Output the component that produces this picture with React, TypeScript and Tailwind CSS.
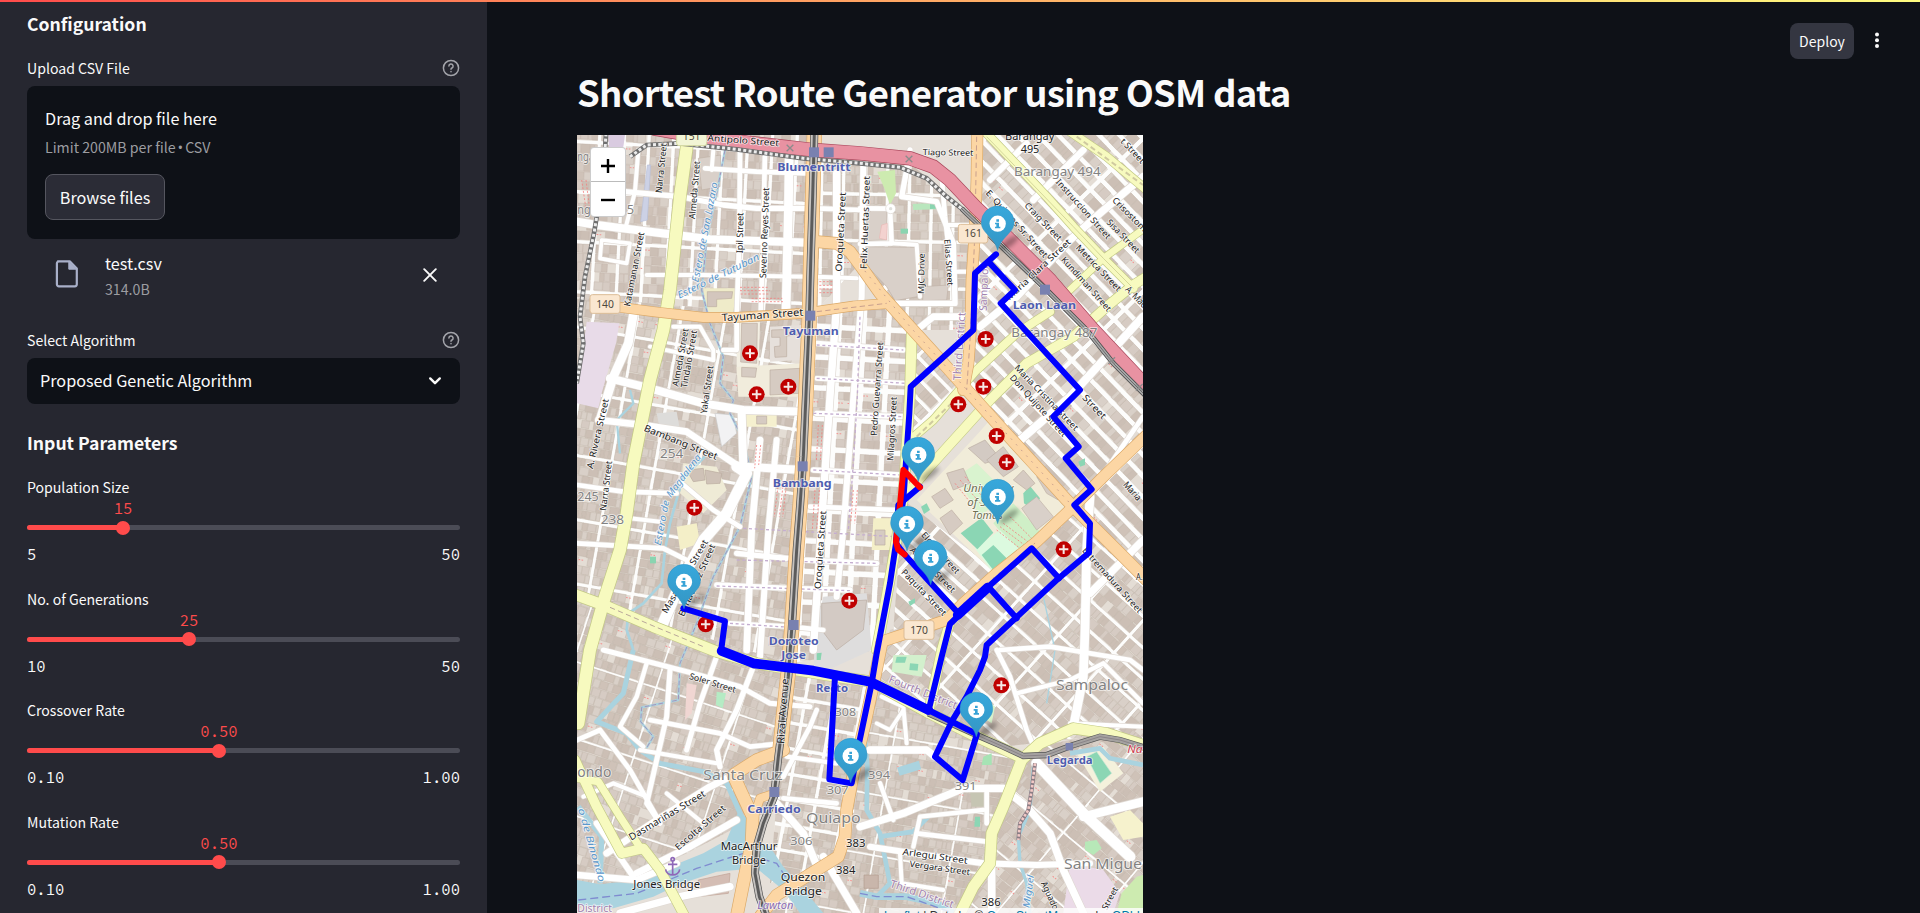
import React from "react";

type Pt = [number, number];

function rng(seed: number) {
  let s = seed;
  return () => {
    s = (s * 1664525 + 1013904223) % 4294967296;
    return s / 4294967296;
  };
}

/* ---------- city blocks ---------- */

interface Region {
  id: string;
  clip: string;
  angle: number;
  w: number;
  h: number;
  street: number;
  cx: number;
  cy: number;
  r: number;
}

const REGIONS: Region[] = [
  { id: "nw", clip: "0,0 740,0 722,560 0,500", angle: 3, w: 74, h: 150, street: 11, cx: 380, cy: 280, r: 520 },
  { id: "n", clip: "735,80 1010,90 1225,280 1210,600 1020,600 870,400 722,560", angle: 1, w: 66, h: 140, street: 11, cx: 960, cy: 320, r: 400 },
  { id: "ne", clip: "1210,0 1730,0 1730,1340 1200,790", angle: 46, w: 330, h: 44, street: 14, cx: 1460, cy: 620, r: 900 },
  { id: "mid", clip: "722,540 950,520 1025,620 1000,1100 920,1560 660,1600 700,1000", angle: 3, w: 74, h: 92, street: 17, cx: 840, cy: 1060, r: 640 },
  { id: "w", clip: "0,500 722,560 700,1000 660,1600 0,1400", angle: 10, w: 130, h: 190, street: 10, cx: 350, cy: 1020, r: 740 },
  { id: "tri", clip: "1025,600 1190,780 1010,960", angle: 46, w: 150, h: 44, street: 11, cx: 1090, cy: 780, r: 250 },
  { id: "se", clip: "1180,1420 1510,1130 1730,1350 1730,1800 1300,1850 920,1640 960,1500", angle: 42, w: 160, h: 70, street: 10, cx: 1360, cy: 1520, r: 560 },
  { id: "paq", clip: "1000,1110 1290,1330 1160,1470 970,1500", angle: 42, w: 210, h: 46, street: 13, cx: 1130, cy: 1310, r: 300 },
  { id: "sw", clip: "0,1400 660,1600 620,2030 0,2349", angle: 18, w: 260, h: 220, street: 6, cx: 300, cy: 1880, r: 620 },
  { id: "s", clip: "650,1620 920,1640 830,2180 600,2260", angle: 10, w: 84, h: 76, street: 11, cx: 760, cy: 1920, r: 420 },
  { id: "sse", clip: "900,1650 1370,1880 1250,2349 600,2349 840,2150", angle: 10, w: 230, h: 180, street: 6, cx: 1040, cy: 2040, r: 560 },
  { id: "sne", clip: "1360,1860 1730,1780 1730,2349 1170,2349 1270,2100", angle: 40, w: 240, h: 170, street: 6, cx: 1500, cy: 2090, r: 480 },
];

const TINTS = ["#d6cbc3", "#cfc2b8", "#d9d0c8", "#ccbfb5"];

function buildRegion(r: Region, seed: number) {
  const rand = rng(seed);
  const houses = ["", "", "", ""];
  let patches = "";
  let pink = "";
  for (let y = -r.r; y < r.r; y += r.h) {
    for (let x = -r.r; x < r.r; x += r.w) {
      const bw = r.w - r.street;
      const bh = r.h - r.street;
      patches += `M${x} ${y}h${bw}v${bh}h${-bw}z`;
      const rows = Math.max(1, Math.round(bh / 26));
      const rh = bh / rows;
      for (let j = 0; j < rows; j++) {
        let px = 0;
        while (px < bw - 6) {
          const ww = Math.min(bw - px, 10 + rand() * 20);
          const k = Math.floor(rand() * 4);
          if (rand() > 0.07) {
            houses[k] += `M${(x + px).toFixed(1)} ${(y + j * rh).toFixed(1)}h${(ww - 1).toFixed(1)}v${(rh - 1 - rand() * 3).toFixed(1)}h${(1 - ww).toFixed(1)}z`;
          } else if (rand() > 0.6) {
            pink += `M${(x + px).toFixed(1)} ${(y + j * rh + 8).toFixed(1)}h16`;
          }
          px += ww;
        }
      }
    }
  }
  return { houses, patches, pink };
}

function Blocks() {
  return (
    <g>
      {REGIONS.map((r, i) => {
        const b = buildRegion(r, 77 + i * 991);
        return (
          <g key={r.id} clipPath={`url(#clip-${r.id})`}>
            <clipPath id={`clip-${r.id}`}>
              <polygon points={r.clip} />
            </clipPath>
            <polygon points={r.clip} fill="#fdfdfc" />
            <g transform={`translate(${r.cx} ${r.cy}) rotate(${r.angle})`}>
              <path d={b.patches} fill="#e4ddd5" />
              {b.houses.map((d, k) => (
                <path key={k} d={d} fill={TINTS[k]} stroke="#c0b3a8" strokeWidth="1.2" />
              ))}
              <path d={b.pink} stroke="#f3918f" strokeWidth="3" strokeDasharray="5 4" />
            </g>
          </g>
        );
      })}
    </g>
  );
}

/* ---------- areas ---------- */

const AREAS: { p: string; c: string; s?: string }[] = [
  { p: "50,575 148,580 138,640 95,790 85,835 21,820 21,760 40,650", c: "#e8dbe8" },
  { p: "115,15 165,15 160,50 118,75", c: "#d9cbe0" },
  { p: "232,105 242,105 232,270 212,275", c: "#ccd1e5", s: "#b8bfd8" },
  { p: "385,85 452,75 450,170 395,180", c: "#d9d0c9", s: "#c0b2a6" },
  { p: "500,575 570,575 565,740 500,735", c: "#f3efe3" },
  { p: "515,580 562,580 560,700 512,696", c: "#d6cbc2", s: "#bcaea2" },
  { p: "600,590 695,585 690,690 600,695", c: "#e6e0db" },
  { p: "605,600 685,597 682,615 650,618 650,680 615,682 613,650 630,648 630,622 605,622", c: "#d6cbc2", s: "#bcaea2" },
  { p: "500,710 700,700 695,800 505,800", c: "#f1ecdc" },
  { p: "515,712 560,714 556,742 515,740", c: "#d6cbc2", s: "#bcaea2" },
  { p: "600,720 690,715 688,790 600,795", c: "#d6cbc2", s: "#bcaea2" },
  { p: "400,475 498,475 490,550 410,550", c: "#efebc9" },
  { p: "412,485 488,485 485,505 440,508 440,530 412,530", c: "#d3c6bd", s: "#bcaea2" },
  { p: "922,125 975,120 978,190 960,225 945,180", c: "#cdebb0" },
  { p: "1028,222 1100,218 1098,238 1030,240", c: "#b9e6bd" },
  { p: "1080,222 1100,218 1098,236 1080,237", c: "#8ad4b0" },
  { p: "992,296 1014,296 1014,311 992,311", c: "#8ad4b0" },
  { p: "905,240 950,240 950,330 885,332 888,260", c: "#d9d0c9", s: "#bfb2a7" },
  { p: "935,285 952,280 950,330 928,325", c: "#f3d2cf", s: "#e9b8b5" },
  { p: "886,350 1040,352 1042,500 975,512 950,470 884,400", c: "#d9d0c9", s: "#bfb2a7" },
  { p: "1060,470 1135,465 1130,510 1058,512", c: "#d9d0c9", s: "#bfb2a7" },
  { p: "435,850 490,855 500,910 455,950", c: "#f2f2f3", s: "#c9c9c9" },
  { p: "520,850 620,850 620,890 525,890", c: "#f5f0cf" },
  { p: "560,858 590,858 590,882 560,882", c: "#d6cbc2", s: "#bcaea2" },
  { p: "260,850 320,845 330,900 270,900", c: "#dddcda" },
  { p: "340,1000 440,1010 470,1080 400,1150 330,1090", c: "#efebd6" },
  { p: "350,1020 400,1015 405,1050 370,1055", c: "#cfc2b7", s: "#b9aa9e" },
  { p: "405,1020 455,1030 450,1060 410,1062", c: "#cfc2b7", s: "#b9aa9e" },
  { p: "320,1190 380,1180 390,1240 330,1260", c: "#f4efc8" },
  { p: "240,1280 258,1280 258,1300 240,1300", c: "#8ad4b0" },
  { p: "910,1165 975,1165 970,1260 905,1260", c: "#f4efc8" },
  { p: "915,1200 945,1200 945,1245 915,1245", c: "#d6cbc2", s: "#bcaea2" },
  { p: "760,1400 890,1390 905,1560 730,1640 735,1500", c: "#dedddd" },
  { p: "755,1420 890,1410 880,1500 800,1560 755,1500", c: "#d3cac4", s: "#b9aca2" },
  { p: "740,1570 755,1568 752,1590 740,1590", c: "#8ad4b0" },
  { p: "1225,910 1260,870 1500,1120 1275,1330 1040,1110", c: "#f1ecd9" },
  { p: "1160,1040 1220,1000 1310,1090 1230,1160", c: "#d9f3cf" },
  { p: "1270,1180 1330,1120 1415,1210 1345,1270", c: "#cfefc7" },
  { p: "1215,1255 1290,1200 1365,1275 1270,1330", c: "#dcfadf" },
  { p: "1172,1210 1235,1163 1270,1208 1222,1258", c: "#8bd6b4" },
  { p: "1235,1275 1270,1245 1310,1285 1268,1318", c: "#8bd6b4" },
  { p: "1360,1090 1380,1068 1410,1105 1388,1140 1362,1120", c: "#8bd6b4" },
  { p: "1355,1135 1400,1100 1450,1160 1400,1200", c: "#d9d0c9", s: "#bfb2a7" },
  { p: "1195,955 1245,930 1290,985 1245,1000", c: "#d3cac3", s: "#b9aca2" },
  { p: "1250,990 1300,950 1345,1010 1300,1040", c: "#d3cac3", s: "#b9aca2" },
  { p: "1400,1040 1440,1075 1465,1110 1430,1090", c: "#d6cbc2", s: "#bcaea2" },
  { p: "1130,1030 1180,1015 1200,1060 1150,1080", c: "#d6cbc2", s: "#bcaea2" },
  { p: "1085,1100 1125,1075 1150,1110 1110,1135", c: "#d6cbc2", s: "#bcaea2" },
  { p: "1110,1165 1145,1140 1178,1180 1140,1215", c: "#d6cbc2", s: "#bcaea2" },
  { p: "1053,1130 1070,1120 1080,1140 1062,1152", c: "#8bd6b4" },
  { p: "1330,1050 1360,1020 1395,1060 1370,1080", c: "#d6cbc2", s: "#bcaea2" },
  { p: "1525,995 1545,985 1545,1005 1530,1010", c: "#8bd6b4" },
  { p: "1015,1415 1035,1405 1035,1418 1020,1428", c: "#8bd6b4" },
  { p: "970,1575 1070,1575 1055,1640 965,1625", c: "#d3f0cd" },
  { p: "980,1580 1010,1580 1005,1598 976,1598", c: "#8bd6b4" },
  { p: "1020,1600 1045,1602 1043,1622 1018,1620", c: "#8bd6b4" },
  { p: "440,1685 468,1690 458,1735 438,1725", c: "#b5ebc4" },
  { p: "1240,1880 1265,1870 1265,1905 1235,1905", c: "#a6e3b4" },
  { p: "1240,1700 1275,1730 1265,1780 1235,1760", c: "#d7f2cb" },
  { p: "1520,1870 1600,1850 1660,1930 1590,1985", c: "#f4f1dc" },
  { p: "1550,1880 1580,1865 1625,1930 1590,1960", c: "#8bd6b4", s: "#cfe8d8" },
  { p: "1545,2135 1580,2130 1595,2155 1570,2175 1545,2160", c: "#b7e8b8" },
  { p: "1640,2349 1655,2290 1700,2240 1719,2235 1719,2349", c: "#cdebb0" },
  { p: "1500,2200 1600,2220 1650,2290 1630,2349 1480,2349", c: "#ebdbe8" },
  { p: "1215,2060 1230,2060 1230,2090 1213,2090", c: "#8bd6b4" },
  { p: "1200,1980 1240,1970 1245,2030 1205,2030", c: "#c6c5b3" },
  { p: "1620,2060 1680,2040 1719,2080 1719,2120 1660,2130", c: "#f6f2cd" },
  { p: "385,2250 480,2230 475,2290 385,2300", c: "#d4bdb4", s: "#c0a296" },
  { p: "882,2235 925,2235 925,2275 882,2275", c: "#c9b6ab", s: "#b39d90" },
  { p: "350,1660 380,1665 365,1750 345,1770", c: "#f0d6d2" },
];

const RIVER =
  "21,2250 90,2263 200,2250 300,2210 400,2170 470,2130 505,2045 528,2060 530,2120 600,2150 640,2210 690,2265 760,2349 690,2349 640,2280 560,2215 440,2225 330,2262 250,2300 130,2335 21,2325";

const CANALS: { d: string; w: number }[] = [
  { d: "M465 60 440 190 410 330 395 480 420 580 460 680 450 760 490 810 480 850 520 930 545 1040 510 1190 430 1340 380 1480 330 1600 325 1710 215 1732 212 1775 250 1820 220 1870", w: 7 },
  { d: "M190 1560 160 1690 80 1775 170 1810 210 1860 270 1900 400 1925 470 1960 515 2060", w: 15 },
  { d: "M25 2030 95 2120 90 2260", w: 16 },
  { d: "M405 980 340 1040 325 1090 300 1180 285 1260 275 1360 220 1420 175 1450 170 1500 190 1560", w: 8 },
  { d: "M885 1830 892 1910 890 2040 930 2110 960 2260 920 2300", w: 14 },
  { d: "M930 2120 1030 2105 1075 2060", w: 14 },
  { d: "M985 1925 1050 1905", w: 26 },
  { d: "M870 2290 920 2300 1010 2300 1100 2320 1150 2349", w: 20 },
  { d: "M1500 1870 1590 1855 1620 1885 1719 1905", w: 14 },
  { d: "M1390 1910 1380 2040 1345 2120 1350 2200 1370 2260 1380 2349", w: 10 },
  { d: "M1420 1400 1455 1560 1430 1720", w: 4 },
  { d: "M180 780 190 820 140 870 150 970", w: 7 },
];

/* ---------- roads ---------- */

const WHITE: { d: string; w: number }[] = [
  { d: "M165 185 330 200 460 225 560 235 718 235", w: 16 },
  { d: "M21 275 80 285 240 305 420 328 718 338", w: 24 },
  { d: "M405 115 560 125 718 130", w: 14 },
  { d: "M230 435 400 435 718 440", w: 12 },
  { d: "M95 330 90 385 170 400 180 340 95 330", w: 11 },
  { d: "M205 60 195 185 165 300", w: 12 },
  { d: "M510 60 508 320 500 560 500 660 460 660", w: 14 },
  { d: "M658 50 655 250 648 545", w: 26 },
  { d: "M585 60 580 300 572 550", w: 14 },
  { d: "M430 60 425 120", w: 12 },
  { d: "M190 555 175 640 130 740 90 870", w: 26 },
  { d: "M120 745 240 775 400 820 520 840 708 845", w: 24 },
  { d: "M85 870 220 885 350 905 500 1005", w: 20 },
  { d: "M500 1010 530 1030 470 1150 400 1230 340 1340 270 1500", w: 32 },
  { d: "M515 845 520 1010 700 1020", w: 24 },
  { d: "M335 1060 430 1140 510 1190", w: 14 },
  { d: "M240 650 430 690", w: 12 },
  { d: "M310 590 390 590 430 660 430 690", w: 12 },
  { d: "M21 1240 280 1255 370 1300", w: 14 },
  { d: "M180 1165 270 1175", w: 12 },
  { d: "M21 1065 160 1085 320 1090", w: 14 },
  { d: "M570 930 545 1200 530 1560", w: 20 },
  { d: "M620 930 595 1200 570 1580", w: 18 },
  { d: "M800 130 800 520 780 800 760 1100 730 1560", w: 22 },
  { d: "M880 100 875 500 850 800 820 1200 800 1400", w: 18 },
  { d: "M500 1270 700 1290 920 1300", w: 16 },
  { d: "M440 1365 660 1375 840 1380", w: 16 },
  { d: "M480 1480 660 1490 760 1500", w: 14 },
  { d: "M740 235 870 240", w: 14 },
  { d: "M740 440 860 445", w: 12 },
  { d: "M740 640 1000 660", w: 16 },
  { d: "M740 745 1010 760", w: 14 },
  { d: "M740 850 1000 860", w: 16 },
  { d: "M730 1020 990 1035", w: 16 },
  { d: "M720 1130 980 1140", w: 14 },
  { d: "M870 235 960 236 965 340 870 342", w: 14 },
  { d: "M965 340 1040 344 1050 500", w: 12 },
  { d: "M1020 60 1010 120 995 200 1100 215 1150 340 1155 520 960 520", w: 16 },
  { d: "M1115 140 1125 260 1145 430", w: 14 },
  { d: "M1200 560 1090 560 1040 600", w: 20 },
  { d: "M1140 425 1200 425", w: 12 },
  { d: "M1130 285 1200 285", w: 12 },
  { d: "M1390 210 1490 110 1540 60", w: 20 },
  { d: "M1230 590 1340 500 1500 330 1590 250 1719 140", w: 22 },
  { d: "M1340 940 1500 800 1719 560", w: 24 },
  { d: "M1560 1090 1719 860", w: 14 },
  { d: "M1370 40 1260 150", w: 18 },
  { d: "M1510 1110 1719 1330", w: 10 },
  { d: "M1560 1100 1550 1260 1545 1500 1540 1640 1510 1790", w: 26 },
  { d: "M1560 1390 1719 1230", w: 22 },
  { d: "M1290 1560 1440 1550 1680 1590 1719 1620", w: 14 },
  { d: "M1280 1560 1320 1640 1370 1800 1400 1870", w: 14 },
  { d: "M1340 1690 1500 1650 1600 1600 1719 1720", w: 13 },
  { d: "M1500 1780 1719 1790", w: 12 },
  { d: "M1400 1900 1540 2050 1680 2180", w: 32 },
  { d: "M1540 2060 1719 2015", w: 26 },
  { d: "M870 2090 1000 2050 1180 1975 1300 1975 1370 2030 1440 2110 1480 2220 1540 2349", w: 22 },
  { d: "M900 1860 1070 1860 1095 1880", w: 22 },
  { d: "M935 1700 1000 1730 1010 1840", w: 12 },
  { d: "M920 1780 960 1800 1000 1740", w: 11 },
  { d: "M930 1960 970 2070M1030 2150 1050 2060 1240 2040", w: 13 },
  { d: "M900 2150 1100 2180 1240 2200 1400 2205 1560 2200", w: 18 },
  { d: "M1040 2110 1250 2135", w: 14 },
  { d: "M990 2170 995 2260 1120 2280", w: 12 },
  { d: "M1265 2210 1265 2349", w: 22 },
  { d: "M1250 1980 1250 2080", w: 14 },
  { d: "M100 1560 370 1630 510 1670 600 1720 720 1730", w: 15 },
  { d: "M440 1580 390 1720 350 1860", w: 15 },
  { d: "M300 1620 290 1760 230 2020 270 2080", w: 15 },
  { d: "M550 1610 500 1740 440 1860 450 1910", w: 16 },
  { d: "M240 1770 450 1810 540 1850 640 1840", w: 14 },
  { d: "M230 1600 200 1700 150 1790 220 1850", w: 13 },
  { d: "M21 1830 90 1800 180 1920 260 2060", w: 14 },
  { d: "M210 1860 440 1900", w: 12 },
  { d: "M40 2000 130 1960 230 2000", w: 12 },
  { d: "M110 2170 260 2070 420 1970 520 1920", w: 20 },
  { d: "M200 2230 360 2150 500 2070", w: 20 },
  { d: "M290 1990 400 2080", w: 12 },
  { d: "M21 2235 200 2250 320 2200", w: 20 },
  { d: "M150 2349 330 2300 480 2270", w: 22 },
  { d: "M80 2080 190 2240", w: 18 },
  { d: "M640 1940 720 1790 740 1740", w: 14 },
  { d: "M650 1880 800 1900", w: 13 },
  { d: "M640 2005 800 2020", w: 14 },
  { d: "M620 2020 700 2110 750 2230", w: 22 },
  { d: "M760 2180 860 2349", w: 22 },
];

const YELLOW: { d: string; w: number }[] = [
  { d: "M355 15 330 200 300 480 280 600 240 750 230 800 190 1000 170 1150 150 1260 105 1400 60 1560 25 1780", w: 36 },
  { d: "M10 1392 100 1425 250 1490 440 1565 560 1600 800 1640 905 1655 1070 1745 1220 1820 1360 1885 1410 1840 1510 1795 1610 1810 1719 1845", w: 32 },
  { d: "M15 1890 80 2030 155 2170 220 2155 270 2220 345 2360", w: 28 },
  { d: "M25 1945 85 1955 150 2060 215 2160", w: 22 },
  { d: "M1245 5 1350 115 1430 200 1510 290 1600 385 1690 475", w: 24 },
  { d: "M1500 5 1610 80 1730 180", w: 24 },
  { d: "M1730 290 1600 385 1500 480", w: 20 },
  { d: "M1730 440 1690 465 1610 530 1510 620 1370 700 1260 810 1070 1020 1000 1105", w: 28 },
  { d: "M1440 545 1340 610 1220 720 1090 870 1020 930", w: 24 },
  { d: "M1025 610 1020 790 1000 1100 975 1260 950 1400 920 1560", w: 30 },
  { d: "M1140 1475 1115 1560 1075 1750", w: 28 },
  { d: "M1355 1890 1300 2030 1265 2110 1260 2200 1210 2270 1165 2360", w: 32 },
];

const ORANGE: { d: string; w: number }[] = [
  { d: "M150 532 250 545 400 562 500 562 700 550 850 528 960 520", w: 28 },
  { d: "M733 10 728 200 722 400 718 560 712 700 700 980 690 1130 680 1260 665 1500 655 1625 640 1760 630 1860", w: 42 },
  { d: "M740 335 800 340 840 365 870 405 930 490 1020 590 1120 700 1200 790 1290 890 1390 1000 1490 1110 1570 1190 1650 1270 1730 1350", w: 34 },
  { d: "M1222 10 1220 150 1215 300 1205 450 1202 600 1195 700 1180 780", w: 32 },
  { d: "M935 1535 1040 1500 1130 1470 1180 1420 1280 1330 1400 1235 1510 1130 1600 1040 1730 915", w: 32 },
  { d: "M935 1540 915 1640 885 1780 850 1930 830 2040 825 2120 805 2180 700 2245 620 2295 570 2360", w: 34 },
  { d: "M640 1860 560 1890 490 1935 515 1990 548 2060 545 2140 520 2260 500 2360", w: 36 },
  { d: "M615 1990 570 2005 552 2060", w: 24 },
];

const PINK = "M250 -5 420 25 640 50 730 60 870 70 1020 85 1090 110 1140 150 1220 235 1300 310 1350 360 1440 450 1570 600 1730 770";
const RAIL_A = "M180 80 230 45 330 40 500 58 700 85 870 100 990 112 1070 145 1130 200 1180 240";
const RAIL_B = "M1175 236 1300 355 1430 480 1550 600 1630 700 1730 800";
const WRAIL = "M108 10 105 60 90 200 72 310 45 440 30 560 40 640 20 760";
const LRT = "M733 10 728 200 722 400 718 560 712 700 700 980 690 1130 680 1260 665 1500 655 1640 640 1760 625 1880 612 2000 580 2080 560 2150 555 2230 568 2300 590 2360";
const LRT2 = "M1075 1750 1220 1815 1300 1850 1360 1878 1430 1875 1510 1845 1590 1820 1650 1830 1730 1855";

const ROUTE_THIN = [
  "M1278 373 1215 430 1210 600 1022 770 1018 850 1000 1110 978 1240 960 1360 920 1570 905 1660 865 1850 845 1960 778 1948 795 1640",
  "M1258 398 1335 480 1292 520 1530 780 1450 860 1526 950 1487 985 1565 1078 1513 1125 1560 1180 1557 1268 1460 1350 1250 1545 1245 1580 1230 1620 1190 1700 1145 1775 1095 1880 1178 1950 1220 1815",
  "M1050 1070 985 1125 978 1240 1005 1275 1165 1450",
  "M1165 1450 1255 1370 1385 1255 1467 1345",
  "M1255 1370 1340 1465",
  "M1255 1370 1140 1482 1115 1580 1075 1745",
  "M340 1435 465 1473 453 1565",
  "M1075 1740 1220 1812",
];
const ROUTE_THICK = ["M455 1563 550 1600 730 1622 900 1655 1075 1740", "M1163 1455 1253 1373"];

/* ---------- labels ---------- */

interface Label {
  t: string;
  x: number;
  y: number;
  a?: number;
  l: number;
  s?: number;
  c?: string;
  b?: boolean;
  i?: boolean;
}

const PLACE = "#828282";
const STATION = "#4f5db0";
const WATER = "#5b98cc";
const DIST = "#a283b0";

const LABELS: Label[] = [
  { t: "Antipolo Street", x: 412, y: 32, a: 4.5, l: 215 },
  { t: "Narra Street", x: 275, y: 190, a: -84, l: 150 },
  { t: "Almeda Street", x: 375, y: 268, a: -85, l: 175 },
  { t: "Ipil Street", x: 518, y: 370, a: -89, l: 122 },
  { t: "Severino Reyes Street", x: 588, y: 445, a: -88, l: 272 },
  { t: "Oroquieta Street", x: 815, y: 425, a: -87, l: 238 },
  { t: "Felix Huertas Street", x: 890, y: 418, a: -88, l: 280 },
  { t: "Katamanan Street", x: 180, y: 530, a: -79, l: 226 },
  { t: "Tayuman Street", x: 456, y: 574, a: -4, l: 245, s: 31 },
  { t: "Almeda Street", x: 325, y: 770, a: -80, l: 175 },
  { t: "Tindalo Street", x: 351, y: 775, a: -80, l: 175 },
  { t: "Yakal Street", x: 410, y: 852, a: -82, l: 145 },
  { t: "Estero de San Lazaro", x: 385, y: 458, a: -79, l: 305, c: WATER, i: true, s: 29 },
  { t: "Estero de Tutuban", x: 328, y: 506, a: -26, l: 270, c: WATER, i: true, s: 29 },
  { t: "Blumentritt", x: 622, y: 124, l: 220, c: STATION, b: true, s: 33 },
  { t: "Tayuman", x: 638, y: 616, l: 168, c: STATION, b: true, s: 33 },
  { t: "Tiago Street", x: 1058, y: 75, a: 1, l: 152, s: 25 },
  { t: "Barangay", x: 1305, y: 30, l: 148, s: 32 },
  { t: "495", x: 1352, y: 70, l: 56, s: 31 },
  { t: "Barangay 494", x: 1332, y: 138, l: 260, c: PLACE, s: 37 },
  { t: "Barangay 487", x: 1324, y: 621, l: 258, c: PLACE, s: 37 },
  { t: "Instruccion Street", x: 1456, y: 157, a: 48, l: 232, s: 26 },
  { t: "Crisostomo", x: 1625, y: 212, a: 45, l: 150, s: 26 },
  { t: "Craig Street", x: 1362, y: 228, a: 46, l: 148, s: 26 },
  { t: "Sisa Street", x: 1608, y: 278, a: 46, l: 130, s: 26 },
  { t: "E. Quintos Sr. Street", x: 1246, y: 190, a: 48, l: 262, s: 26 },
  { t: "Metrica Street", x: 1516, y: 355, a: 46, l: 182, s: 26 },
  { t: "Kundiman Street", x: 1472, y: 390, a: 48, l: 210, s: 26 },
  { t: "Maria Clara Street", x: 1318, y: 512, a: -43, l: 255, s: 26 },
  { t: "A. Maceda", x: 1664, y: 480, a: 45, l: 120, s: 28 },
  { t: "t Street", x: 1650, y: 35, a: 47, l: 92, s: 26 },
  { t: "Laon Laan", x: 1328, y: 538, l: 190, c: STATION, b: true, s: 33 },
  { t: "Elias Street", x: 1123, y: 328, a: 86, l: 140, s: 25 },
  { t: "MJC Drive", x: 1062, y: 492, a: -89, l: 122, s: 25 },
  { t: "Sampaloc", x: 1250, y: 543, a: -88, l: 142, c: DIST, s: 32 },
  { t: "Third District", x: 1172, y: 752, a: -86, l: 205, c: DIST, s: 32 },
  { t: "Pedro Guevarra Street", x: 920, y: 918, a: -86, l: 282, s: 26 },
  { t: "Milagros Street", x: 970, y: 993, a: -87, l: 192, s: 26 },
  { t: "Maria Cristina Street", x: 1332, y: 715, a: 46, l: 262, s: 26 },
  { t: "Don Quijote Street", x: 1318, y: 744, a: 48, l: 240, s: 26 },
  { t: "Street", x: 1535, y: 805, a: 46, l: 90, s: 28 },
  { t: "Maria", x: 1658, y: 1065, a: 48, l: 66, s: 28 },
  { t: "Extremadura Street", x: 1535, y: 1262, a: 48, l: 255, s: 26 },
  { t: "A.", x: 1698, y: 1350, l: 20, s: 28 },
  { t: "Bambang Street", x: 220, y: 902, a: 22, l: 235, s: 29 },
  { t: "A. Rivera Street", x: 68, y: 1018, a: -77, l: 215, s: 27 },
  { t: "Narra Street", x: 108, y: 1143, a: -83, l: 150 },
  { t: "254", x: 270, y: 985, l: 70, c: PLACE, s: 36 },
  { t: "245", x: 22, y: 1112, l: 64, c: PLACE, s: 36 },
  { t: "238", x: 92, y: 1182, l: 70, c: PLACE, s: 36 },
  { t: "Estero de", x: 272, y: 1248, a: -79, l: 138, c: WATER, i: true, s: 29 },
  { t: "Magdalena", x: 303, y: 1104, a: -53, l: 152, c: WATER, i: true, s: 29 },
  { t: "Bambang", x: 608, y: 1071, l: 177, c: STATION, b: true, s: 33 },
  { t: "Oroquieta Street", x: 752, y: 1378, a: -86, l: 235 },
  { t: "Masangkay Street", x: 290, y: 1452, a: -60, l: 250, s: 27 },
  { t: "Benavidez Street", x: 341, y: 1462, a: -66, l: 235, s: 27 },
  { t: "Doroteo", x: 596, y: 1545, l: 150, c: STATION, b: true, s: 33 },
  { t: "Jose", x: 634, y: 1588, l: 74, c: STATION, b: true, s: 33 },
  { t: "University", x: 1180, y: 1087, l: 150, c: "#6f7052", i: true, s: 32 },
  { t: "of Santo", x: 1192, y: 1128, l: 126, c: "#6f7052", i: true, s: 32 },
  { t: "Tomas", x: 1206, y: 1168, l: 92, c: "#6f7052", i: true, s: 32 },
  { t: "Eloisa Street", x: 1052, y: 1216, a: 48, l: 158, s: 26 },
  { t: "Adelina Street", x: 1018, y: 1262, a: 45, l: 180, s: 26 },
  { t: "Paquita Street", x: 992, y: 1328, a: 46, l: 182, s: 26 },
  { t: "Soler Street", x: 356, y: 1646, a: 17, l: 145, s: 26 },
  { t: "Recto", x: 738, y: 1686, l: 96, c: STATION, b: true, s: 29 },
  { t: "308", x: 794, y: 1758, l: 64, c: PLACE, s: 34 },
  { t: "Rizal Avenue", x: 642, y: 1842, a: -86, l: 196, s: 30 },
  { t: "Santa Cruz", x: 400, y: 1949, l: 238, c: PLACE, s: 42 },
  { t: "ondo", x: 22, y: 1942, l: 102, c: PLACE, s: 42 },
  { t: "307", x: 770, y: 1991, l: 66, c: PLACE, s: 34 },
  { t: "Carriedo", x: 532, y: 2048, l: 160, c: STATION, b: true, s: 33 },
  { t: "Quiapo", x: 708, y: 2080, l: 164, c: PLACE, s: 42 },
  { t: "306", x: 660, y: 2146, l: 68, c: PLACE, s: 34 },
  { t: "383", x: 828, y: 2151, l: 58, s: 31 },
  { t: "384", x: 798, y: 2233, l: 58, s: 31 },
  { t: "Dasmariñas Street", x: 184, y: 2132, a: -31, l: 262, s: 29 },
  { t: "Escolta Street", x: 325, y: 2162, a: -41, l: 190, s: 27 },
  { t: "MacArthur", x: 452, y: 2160, l: 170, s: 31 },
  { t: "Bridge", x: 486, y: 2201, l: 102, s: 31 },
  { t: "Quezon", x: 632, y: 2252, l: 134, s: 33 },
  { t: "Bridge", x: 642, y: 2295, l: 114, s: 33 },
  { t: "Jones Bridge", x: 190, y: 2275, l: 200, s: 31 },
  { t: "Lawton", x: 562, y: 2336, l: 108, c: "#8b6db5", i: true, s: 30 },
  { t: "o de Binondo", x: 24, y: 2038, a: 74, l: 228, c: WATER, i: true, s: 29 },
  { t: "District", x: 22, y: 2346, l: 104, c: DIST, s: 30 },
  { t: "Fourth District", x: 954, y: 1656, a: 22, l: 218, c: DIST, s: 32 },
  { t: "Sampaloc", x: 1458, y: 1680, l: 216, c: PLACE, s: 42 },
  { t: "Legarda", x: 1430, y: 1903, l: 138, c: STATION, b: true, s: 30 },
  { t: "Na", x: 1672, y: 1868, l: 46, c: "#cf3c4f", i: true, s: 34 },
  { t: "394", x: 894, y: 1947, l: 66, c: PLACE, s: 34 },
  { t: "391", x: 1154, y: 1981, l: 66, c: PLACE, s: 34 },
  { t: "Arlegui Street", x: 997, y: 2174, a: 8, l: 196, s: 27 },
  { t: "Vergara Street", x: 1018, y: 2210, a: 8, l: 182, s: 26 },
  { t: "San Migue", x: 1482, y: 2218, l: 234, c: PLACE, s: 42 },
  { t: "Third District", x: 958, y: 2270, a: 19, l: 200, c: DIST, s: 32 },
  { t: "386", x: 1234, y: 2329, l: 58, s: 31 },
  { t: "Aguado", x: 1412, y: 2260, a: 65, l: 90, s: 27 },
  { t: "Miguel", x: 1378, y: 2335, a: -82, l: 100, c: WATER, i: true, s: 28 },
  { t: "Street", x: 1610, y: 2342, a: -62, l: 74, s: 26 },
  { t: "nga", x: 22, y: 94, l: 50, c: PLACE, s: 36 },
  { t: "ng", x: 22, y: 252, l: 40, c: PLACE, s: 36 },
  { t: "5", x: 170, y: 252, l: 22, c: PLACE, s: 36 },
];

const SHIELDS: { t: string; x: number; y: number; w: number; f: string; s: string }[] = [
  { t: "151", x: 365, y: 19, w: 90, f: "#f2f5d5", s: "#d3d9a0" },
  { t: "140", x: 105, y: 522, w: 90, f: "#fae7d0", s: "#dcbd97" },
  { t: "161", x: 1209, y: 311, w: 88, f: "#fae7d0", s: "#dcbd97" },
  { t: "170", x: 1047, y: 1500, w: 90, f: "#fae7d0", s: "#dcbd97" },
];

const HOSPITALS: Pt[] = [
  [540, 670], [655, 770], [560, 793], [1247, 627], [1240, 770], [1165, 823], [1280, 918],
  [1310, 997], [1481, 1258], [373, 1133], [407, 1483], [838, 1412], [1294, 1666],
];

const STATIONS: Pt[] = [
  [732, 67], [776, 67], [721, 557], [698, 1009], [671, 1485], [613, 1986], [1425, 479],
];

const MARKERS: Pt[] = [
  [1283, 279], [1045, 973], [1283, 1099], [1011, 1180], [1082, 1282], [342, 1354], [842, 1876], [1219, 1738],
];

function Roads({ list, fill, edge }: { list: { d: string; w: number }[]; fill: string; edge: string }) {
  return (
    <g fill="none" strokeLinejoin="round" strokeLinecap="round">
      {list.map((r, i) => (
        <path key={`e${i}`} d={r.d} stroke={edge} strokeWidth={r.w + 4} />
      ))}
      {list.map((r, i) => (
        <path key={`f${i}`} d={r.d} stroke={fill} strokeWidth={r.w} />
      ))}
    </g>
  );
}

function Marker({ p }: { p: Pt }) {
  return (
    <g transform={`translate(${p[0]} ${p[1]})`}>
      <ellipse cx="34" cy="60" rx="34" ry="11" fill="#000" opacity="0.32" transform="rotate(-36 34 60)" filter="url(#soft)" />
      <path
        d="M0 82C-6 60-16 50-30 35-42 22-49 13-49-2A49 49 0 0 1 49-2C49 13 42 22 30 35 16 50 6 60 0 82Z"
        fill="url(#pin)"
        stroke="#2f93c4"
        strokeWidth="1.5"
      />
      <circle cy="2" r="24.5" fill="#fff" />
      <path d="M-4-11h8v7h-8zM-8-1H4v12h4v5H-8v-5h4V4h-4z" fill="#38a3d6" />
    </g>
  );
}

function RouteMap() {
  return (
    <svg viewBox="21 15 1698 2334" className="block h-full w-full" fontFamily='"Noto Sans", sans-serif'>
      <defs>
        <linearGradient id="pin" x1="0" y1="0" x2="0" y2="1">
          <stop offset="0" stopColor="#37a8dc" />
          <stop offset="1" stopColor="#3496c4" />
        </linearGradient>
        <filter id="soft" x="-50%" y="-100%" width="200%" height="300%">
          <feGaussianBlur stdDeviation="6" />
        </filter>
      </defs>
      <rect x="0" y="0" width="1740" height="2370" fill="#e6e0d9" />
      <Blocks />
      {AREAS.map((a, i) => (
        <polygon key={i} points={a.p} fill={a.c} stroke={a.s ?? "none"} strokeWidth="2" />
      ))}
      <polygon points={RIVER} fill="#aad3df" />
      <g fill="none" stroke="#aad3df" strokeLinejoin="round">
        {CANALS.map((c, i) => (
          <path key={i} d={c.d} strokeWidth={c.w} />
        ))}
      </g>
      <path d={CANALS[0].d} fill="none" stroke="#a184b4" strokeWidth="3" strokeDasharray="14 7" opacity="0.8" />
      <path d="M25 2310 200 2290 380 2215 520 2170 620 2200 680 2290M870 2290 920 2300 1010 2300 1150 2349" fill="none" stroke="#7f8bd0" strokeWidth="4" strokeDasharray="24 12" />

      <Roads list={WHITE} fill="#ffffff" edge="#e0dad4" />
      <circle cx="962" cy="236" r="15" fill="#ffffff" stroke="#dcd6d0" strokeWidth="2" />
      <circle cx="962" cy="236" r="5" fill="#e0e0dc" />
      <g fill="none" stroke="#c5aed0" strokeWidth="4" strokeDasharray="9 8">
        <path d="M740 645 1000 660M740 745 1010 760M730 850 1000 860M730 1020 990 1035M520 1195 980 1220M500 1290 920 1300M440 1368 840 1382M480 1480 660 1492M870 560 862 800 850 1000 835 1200" />
      </g>
      <g fill="none" stroke="#f2807e" strokeWidth="3" strokeDasharray="6 5" opacity="0.8">
        <path d="M510 472h86M510 482h90M512 492h84M545 505h92M545 515h94M748 455h44M748 466h42M748 477h44M748 488h40M35 150l12 80M48 150l10 80M745 885l-6 110M757 885l-6 110M560 945l-6 70M572 945l-6 60M640 1060l-12 100M625 1060l-12 100M650 1060l-12 100M1170 1050l70 80M1185 1040l70 80M1155 1060l60 75M1290 1190l80 60M1300 1180l80 60M1280 1200l70 55M1320 1160l70 70M748 1080l-8 120M735 1080l-8 120M850 1080l-8 100M862 1080l-8 100" />
      </g>
      <Roads list={YELLOW} fill="#f7fabf" edge="#c3ca84" />
      <Roads list={ORANGE} fill="#fcd6a4" edge="#dba968" />
      <g fill="none" stroke="#c9a08e" strokeWidth="3" strokeDasharray="16 10">
        <path d="M1220 20 1215 300 1202 600 1190 780M740 545 950 520" />
        <path d="M870 405 1020 590 1200 790 1390 1000 1500 1120M1180 1420 1400 1235" strokeDasharray="5 18" />
        <path d="M120 1432 250 1488 400 1550" stroke="#b8a69a" />
        <path d="M1250 20 1510 290 1600 385M1600 385 1690 475" stroke="#d4d79a" strokeWidth="3" strokeDasharray="none" />
        <path d="M1520 20 1719 165M1040 920 1160 805" stroke="#cfc9a0" strokeWidth="6" />
      </g>

      <g fill="none">
        <path d={PINK} stroke="#a9485c" strokeWidth="43" />
        <path d={PINK} stroke="#e892a2" strokeWidth="39" />
        {[RAIL_A, WRAIL].map((d) => (
          <g key={d}>
            <path d={d} stroke="#6f6f6f" strokeWidth="14" />
            <path d={d} stroke="#ececec" strokeWidth="9" strokeDasharray="9 7" />
          </g>
        ))}
        <path d={RAIL_B} stroke="#4c4c4c" strokeWidth="16" />
        <path d={RAIL_B} stroke="#a9a9a9" strokeWidth="11" />
        <path d={RAIL_B} stroke="#6a6a6a" strokeWidth="3" />
        <path d={LRT} stroke="#4f4f4f" strokeWidth="24" />
        <path d={LRT} stroke="#c6c3c0" strokeWidth="20" />
        <path d={LRT} stroke="#5b5b5b" strokeWidth="9" />
        <path d={LRT2} stroke="#555" strokeWidth="19" />
        <path d={LRT2} stroke="#a5a2a0" strokeWidth="15" />
        <path d={LRT2} stroke="#8a8488" strokeWidth="3" />
        <path d="M1395 1900 1385 1980 1375 2040 1350 2080 1345 2130" stroke="#8a7c84" strokeWidth="12" />
        <path d="M1395 1900 1385 1980 1375 2040 1350 2080 1345 2130" stroke="#f2c9c6" strokeWidth="8" strokeDasharray="8 5" />
      </g>
      <g stroke="#8c8c8c" strokeWidth="4">
        {([[660, 54], [1017, 87], [1625, 692], [1708, 772]] as Pt[]).map(([x, y]) => (
          <path key={x} d={`M${x - 10} ${y - 10}l20 20m0-20l-20 20`} />
        ))}
      </g>
      <g fill="none" stroke="#8f68b8" strokeWidth="5">
        <circle cx="308" cy="2188" r="5" />
        <path d="M308 2193v42M294 2203h28M287 2218c2 22 40 22 42 0" />
      </g>

      {STATIONS.map(([x, y]) => (
        <rect key={`${x}-${y}`} x={x - 15} y={y - 15} width="30" height="30" fill="#7981b0" />
      ))}
      <rect x="1487" y="1839" width="22" height="22" fill="#7981b0" />

      {SHIELDS.map((s) => (
        <g key={s.t}>
          <rect x={s.x - s.w / 2} y={s.y - 28} width={s.w} height="56" rx="7" fill={s.f} stroke={s.s} strokeWidth="3" />
          <text x={s.x} y={s.y + 11} fontSize="31" textAnchor="middle" fill="#4c473d">
            {s.t}
          </text>
        </g>
      ))}

      {LABELS.map((l, i) => (
        <text
          key={i}
          transform={`translate(${l.x} ${l.y}) rotate(${l.a ?? 0})`}
          fontSize={l.s ?? 27}
          fontWeight={l.b ? 700 : 400}
          fontStyle={l.i ? "italic" : "normal"}
          fill={l.c ?? "#222222"}
          stroke="#ffffff"
          strokeOpacity="0.7"
          strokeWidth="5"
          strokeLinejoin="round"
          paintOrder="stroke"
          textLength={l.l}
          lengthAdjust="spacingAndGlyphs"
        >
          {l.t}
        </text>
      ))}

      {HOSPITALS.map(([x, y]) => (
        <g key={`${x}-${y}`} transform={`translate(${x} ${y})`}>
          <circle r="24" fill="#bf0000" />
          <path d="M-14 0h28M0-14v28" stroke="#f6e9e6" strokeWidth="6" />
        </g>
      ))}

      <g fill="none" stroke="#0000ff" strokeLinecap="round" strokeLinejoin="round">
        {ROUTE_THIN.map((d) => (
          <path key={d} d={d} strokeWidth="18" />
        ))}
        {ROUTE_THICK.map((d) => (
          <path key={d} d={d} strokeWidth="29" />
        ))}
      </g>
      <g fill="none" stroke="#ff0000" strokeLinecap="round" strokeLinejoin="round" strokeWidth="18">
        <path d="M1050 1072 1000 1020 990 1125 978 1235 984 1258 1004 1274" />
      </g>
      {MARKERS.map((m) => (
        <Marker key={`${m[0]}-${m[1]}`} p={m} />
      ))}
    </svg>
  );
}

/* ---------- sidebar ---------- */

function Help() {
  return (
    <svg viewBox="0 0 18 18" className="h-[18px] w-[18px]" fill="none" stroke="#a3a4aa" strokeWidth="1.5" strokeLinecap="round">
      <circle cx="9" cy="9" r="7.6" />
      <path d="M6.9 7.1a2.1 2.1 0 1 1 3.1 1.9c-.7.4-1 .7-1 1.2" />
      <path d="M9 12.6v.1" />
    </svg>
  );
}

function FieldLabel({ text, help }: { text: string; help?: boolean }) {
  return (
    <div className="flex h-[18px] items-center justify-between">
      <span className="text-[14.1px] leading-[18px] whitespace-nowrap">{text}</span>
      {help && <Help />}
    </div>
  );
}

interface SliderProps {
  label: string;
  value: string;
  min: string;
  max: string;
  at: number;
}

function Slider({ label, value, min, max, at }: SliderProps) {
  return (
    <div className="h-[111.5px]">
      <FieldLabel text={label} />
      <div className="relative mt-[29px] h-[5px] rounded-full bg-[#4b4c56]">
        <div className="h-full rounded-full bg-[#ff4b4b]" style={{ width: at }} />
        <div className="absolute top-1/2 size-[14px] -translate-x-1/2 -translate-y-1/2 rounded-full bg-[#ff4b4b]" style={{ left: at }} />
        <span
          className="absolute -top-[26px] -translate-x-1/2 font-['Source_Code_Pro','Liberation_Mono',monospace] text-[15.6px] leading-[20px] text-[#ff4b4b]"
          style={{ left: at }}
        >
          {value}
        </span>
      </div>
      <div className="mt-[15px] flex justify-between font-['Source_Code_Pro','Liberation_Mono',monospace] text-[15.6px] leading-[20px]">
        <span>{min}</span>
        <span>{max}</span>
      </div>
    </div>
  );
}

function Sidebar() {
  return (
    <aside className="h-full w-[487px] shrink-0 bg-[#262730] px-[27px] pt-[12px]">
      <h2 className="h-6 text-[17.6px] leading-6 font-bold">Configuration</h2>
      <div className="mt-[23px]">
        <FieldLabel text="Upload CSV File" help />
      </div>
      <div className="mt-[9px] h-[153px] rounded-lg bg-[#0e1117] px-[18px] pt-[19px]">
        <p className="text-[16.2px] leading-[26px]">Drag and drop file here</p>
        <p className="mt-[5px] text-[14.2px] leading-[22px] text-[#9c9da1]">
          Limit 200MB per file<span className="mx-[2px] font-['Open_Sans',sans-serif] text-[15px]">•</span>CSV
        </p>
        <button className="mt-[16px] flex h-[46px] w-[120px] items-center justify-center rounded-lg border border-[#55565f] bg-[#2b2c36] text-[16.2px]">
          Browse files
        </button>
      </div>
      <div className="mt-[9px] flex h-[54px] items-center">
        <svg viewBox="0 0 24 28" className="-mt-[2px] ml-[28px] h-7 w-6" fill="none" stroke="#a9b0c9" strokeWidth="2.2" strokeLinejoin="round">
          <path d="M2.9 1.4H15l6.8 7v15.900a2 2 0 0 1-2 2H3.900a2 2 0 0 1-2-2V3.400a2 2 0 0 1 2-2z" />
          <path d="M13.800 1.400v7.800h8z" fill="#a9b0c9" strokeWidth="1" />
        </svg>
        <div className="ml-[26px] flex-1">
          <p className="text-[16.2px] leading-[28px]">test.csv</p>
          <p className="text-[14.2px] leading-[24px] text-[#9c9da1]">314.0B</p>
        </div>
        <svg viewBox="0 0 14 14" className="mr-[23px] size-[14px]" stroke="#fafafa" strokeWidth="1.9" strokeLinecap="round">
          <path d="M1.200 1.200l11.600 11.600M12.800 1.200L1.200 12.800" />
        </svg>
      </div>
      <div className="mt-[29px]">
        <FieldLabel text="Select Algorithm" help />
      </div>
      <div className="mt-[9px] flex h-[46px] items-center justify-between rounded-lg bg-[#0e1117] pr-[18px] pl-[13px]">
        <span className="-mt-[2px] text-[16.2px]">Proposed Genetic Algorithm</span>
        <svg viewBox="0 0 14 10" className="h-[10px] w-[14px]" fill="none" stroke="#fafafa" strokeWidth="2.400" strokeLinecap="round" strokeLinejoin="round">
          <path d="M2.200 2.400L7 7.200l4.800-4.800" />
        </svg>
      </div>
      <h2 className="mt-[27px] h-6 text-[17.6px] leading-6 font-bold">Input Parameters</h2>
      <div className="mt-[23px]">
        <Slider label="Population Size" value="15" min="5" max="50" at={96} />
        <Slider label="No. of Generations" value="25" min="10" max="50" at={162} />
        <Slider label="Crossover Rate" value="0.50" min="0.10" max="1.00" at={192} />
        <Slider label="Mutation Rate" value="0.50" min="0.10" max="1.00" at={192} />
      </div>
    </aside>
  );
}

export default function App() {
  return (
    <div className="relative flex h-[913px] w-[1920px] overflow-hidden bg-[#0e1117] font-['Source_Sans_Pro','Noto_Sans_CJK_SC',sans-serif] text-[#fafafa]">
      <div className="absolute inset-x-0 top-0 z-10 h-[2px] bg-linear-to-r from-[#ff4b4b] to-[#fffd80]" />
      <Sidebar />
      <main className="flex min-w-0 flex-1 flex-col pl-[90px]">
        <header className="flex h-[66px] items-end justify-end pr-[37px] pb-[7px]">
          <button className="h-9 w-16 rounded-lg bg-[#343641] text-[14px] leading-9">Deploy</button>
          <svg viewBox="0 0 12 36" className="ml-[17px] h-9 w-3" fill="#fafafa">
            <circle cx="6" cy="11.500" r="2" />
            <circle cx="6" cy="17.300" r="2" />
            <circle cx="6" cy="23" r="2" />
          </svg>
        </header>
        <h1 className="h-[69px] text-[36.5px] leading-[52px] font-bold tracking-[-0.74px] whitespace-nowrap">Shortest Route Generator using OSM data</h1>
        <div className="relative h-[778px] w-[566px] shrink-0 overflow-hidden">
          <RouteMap />
          <div className="absolute top-[12px] left-[13px] flex w-[36px] flex-col rounded-[4px] border border-black/20 bg-white text-black">
            <button aria-label="Zoom in" className="flex h-[34px] items-center justify-center border-b border-[#bbb] pt-[3px]">
              <svg viewBox="0 0 14 14" className="size-[14px]" stroke="#000" strokeWidth="2.400">
                <path d="M7 0v14M0 7h14" />
              </svg>
            </button>
            <button aria-label="Zoom out" className="flex h-[34px] items-center justify-center">
              <svg viewBox="0 0 14 14" className="size-[14px]" stroke="#000" strokeWidth="2.400">
                <path d="M0 8h14" />
              </svg>
            </button>
          </div>
          <div className="absolute right-0 bottom-0 h-[5px] w-[264px] overflow-hidden bg-white/80 font-['Liberation_Sans',sans-serif] text-[12px] leading-[17px] whitespace-nowrap text-[#333]">
            <div className="px-[5px] text-right">
              <span className="text-[#0078a8]">Leaflet</span> | Data by © <span className="text-[#0078a8]">OpenStreetMap</span>, under{" "}
              <span className="text-[#0078a8]">ODbL</span>.
            </div>
          </div>
        </div>
      </main>
    </div>
  );
}
